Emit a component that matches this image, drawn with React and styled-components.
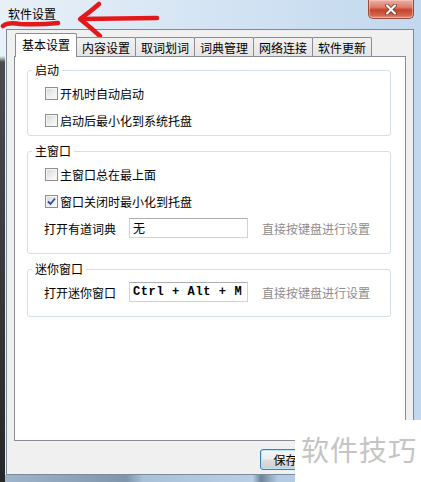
import React from 'react'
import styled, { createGlobalStyle } from 'styled-components'

const GlobalStyle = createGlobalStyle`
  html, body { margin: 0; padding: 0; }
  body {
    width: 421px;
    height: 482px;
    overflow: hidden;
    font-family: "Noto Sans CJK SC", "Noto Sans", sans-serif;
    font-size: 12px;
    color: #000;
  }
`

const Window = styled.div`
  position: relative;
  width: 421px;
  height: 482px;
  box-sizing: border-box;
  padding: 0 7px 7px 6px;
  display: flex;
  flex-direction: column;
  overflow: hidden;
  background:
    linear-gradient(to bottom, transparent 0, transparent 56px, #4a4c50 62px, #262729 100%) left top / 5px 100% no-repeat,
    linear-gradient(to right, #9fb6cc 0, #7e95ab 30%, #a9c1d9 34%, #b8cfe6 60%, #6d8399 62%, #b3cbe3 66%, #b3cbe3 100%) left bottom / 100% 7px no-repeat,
    linear-gradient(to right, #e8f0f8 0%, #d6e5f4 45%, #c2d8ee 100%);
`

const TitleBar = styled.div`
  height: 29px;
  display: flex;
  justify-content: space-between;
  align-items: flex-start;
`

const Title = styled.div`
  padding: 6px 0 0 2px;
  line-height: 16px;
  font-size: 12px;
`

const CloseButton = styled.div`
  width: 44px;
  height: 18px;
  border: 1px solid #9a4a3c;
  border-top: none;
  border-radius: 0 0 5px 5px;
  background: linear-gradient(to bottom, #eab1a6 0%, #dd7d6a 40%, #c8422b 55%, #d0654f 85%, #e39a86 100%);
  display: flex;
  align-items: center;
  justify-content: center;
  box-shadow: inset 0 0 0 1px rgba(255, 210, 200, 0.5);
`

const Client = styled.div`
  flex: 1;
  display: flex;
  flex-direction: column;
  border: 1px solid #7d8a98;
  background: #f0f0f0;
  padding: 3px 7px 0 7px;
`

const TabBar = styled.div`
  display: flex;
  align-items: flex-end;
  height: 23px;
  padding-left: 1px;
  position: relative;
  z-index: 1;
`

const Tab = styled.div`
  box-sizing: border-box;
  height: ${p => (p.$active ? '24px' : '19px')};
  margin-bottom: ${p => (p.$active ? '-1px' : '0')};
  margin-right: -1px;
  padding: ${p => (p.$active ? '3px 6px 0' : '2px 5px 0')};
  line-height: 16px;
  border: 1px solid #898c95;
  border-bottom: none;
  border-radius: 2px 2px 0 0;
  background: ${p => (p.$active ? '#fff' : 'linear-gradient(to bottom, #f2f2f2, #e4e4e4)')};
  white-space: nowrap;
`

const Panel = styled.div`
  height: 385px;
  box-sizing: border-box;
  border: 1px solid #898c95;
  background: #fff;
  padding: 6px 14px 0 12px;
`

const Group = styled.fieldset`
  margin: ${p => (p.$first ? '0' : '8px 0 0')};
  padding: ${p => p.$pad};
  border: 1px solid #d5dfe5;
  border-radius: 3px;
  min-width: 0;
`

const Legend = styled.legend`
  margin-left: -12px;
  padding: 0 3px;
  line-height: 14px;
  font-size: 12px;
`

const Row = styled.div`
  display: flex;
  align-items: center;
  height: ${p => p.$h || 27}px;
`

const Box = styled.span`
  box-sizing: border-box;
  width: 13px;
  height: 13px;
  margin: 0 2px 0 1px;
  border: 1px solid #8e8f8f;
  background: linear-gradient(135deg, #d2d4d6 0%, #eeeeee 55%, #fbfbfb 100%);
  box-shadow: inset 0 0 0 1px #f6f6f6;
  display: flex;
  align-items: center;
  justify-content: center;
`

const FieldLabel = styled.span`
  width: 85px;
`

const Input = styled.div`
  box-sizing: border-box;
  width: 119px;
  height: 20px;
  border: 1px solid #d0d4d9;
  border-top-color: #abadb3;
  padding: 0 3px;
  line-height: 18px;
  font-family: ${p => (p.$mono ? '"Liberation Mono", monospace' : 'inherit')};
  font-size: 12px;
  font-weight: ${p => (p.$mono ? 'bold' : 'normal')};
  letter-spacing: ${p => (p.$mono ? '0.6px' : '0')};
  white-space: nowrap;
  overflow: hidden;
`

const Hint = styled.span`
  margin-left: 14px;
  color: #8d8d8d;
`

const Footer = styled.div`
  display: flex;
  margin-top: 8px;
  padding-left: 246px;
`

const Button = styled.div`
  box-sizing: border-box;
  width: 75px;
  height: 21px;
  border: 1px solid #3c7fb1;
  border-radius: 3px;
  background: linear-gradient(to bottom, #f7f7f7 0%, #ececec 48%, #dddddd 52%, #cfcfcf 100%);
  box-shadow: inset 0 0 0 1px #b8e6fb;
  text-align: center;
  line-height: 19px;
`

const Watermark = styled.div`
  position: absolute;
  right: 0;
  bottom: 0;
  width: 126px;
  height: 62px;
  box-sizing: border-box;
  padding: 10px 0 0 6px;
  background: #fff;
  color: #c4c4c4;
  font-size: 28px;
  line-height: 38px;
  letter-spacing: 1px;
  white-space: nowrap;
`

const Annotation = styled.svg`
  position: absolute;
  left: 0;
  top: 0;
  pointer-events: none;
`

const Check = ({ checked }) => (
  <Box>
    {checked && (
      <svg width="9" height="9" viewBox="0 0 9 9">
        <path d="M1 4.5 L3.5 7 L8 1.5" fill="none" stroke="#2b4c93" strokeWidth="1.8" />
      </svg>
    )}
  </Box>
)

const tabs = ['基本设置', '内容设置', '取词划词', '词典管理', '网络连接', '软件更新']

export default function App() {
  return (
    <Window>
      <GlobalStyle />
      <TitleBar>
        <Title>软件设置</Title>
        <CloseButton>
          <svg width="14" height="11" viewBox="0 0 14 11">
            <path d="M3 1.5 L11 9.5 M11 1.5 L3 9.5" stroke="#6a2a20" strokeWidth="3.6" strokeLinecap="round" />
            <path d="M3 1.5 L11 9.5 M11 1.5 L3 9.5" stroke="#fff" strokeWidth="2.2" strokeLinecap="round" />
          </svg>
        </CloseButton>
      </TitleBar>
      <Client>
        <TabBar>
          {tabs.map((t, i) => (
            <Tab key={t} $active={i === 0}>{t}</Tab>
          ))}
        </TabBar>
        <Panel>
          <Group $first $pad="3px 16px 1px">
            <Legend>启动</Legend>
            <Row><Check />开机时自动启动</Row>
            <Row><Check />启动后最小化到系统托盘</Row>
          </Group>
          <Group $pad="3px 16px 12px">
            <Legend>主窗口</Legend>
            <Row><Check />主窗口总在最上面</Row>
            <Row><Check checked />窗口关闭时最小化到托盘</Row>
            <Row $h={26}>
              <FieldLabel>打开有道词典</FieldLabel>
              <Input>无</Input>
              <Hint>直接按键盘进行设置</Hint>
            </Row>
          </Group>
          <Group $pad="3px 16px 11px">
            <Legend>迷你窗口</Legend>
            <Row $h={26}>
              <FieldLabel>打开迷你窗口</FieldLabel>
              <Input $mono>Ctrl + Alt + M</Input>
              <Hint>直接按键盘进行设置</Hint>
            </Row>
          </Group>
        </Panel>
        <Footer>
          <Button>保存设置</Button>
        </Footer>
      </Client>
      <Watermark>软件技巧</Watermark>
      <Annotation width="170" height="40" viewBox="0 0 170 40">
        <path d="M3 26 Q8 22 20 24 Q40 25 58 23" fill="none" stroke="#e2191b" strokeWidth="4.5" strokeLinecap="round" />
        <path d="M81 19 L157 18" fill="none" stroke="#e2191b" strokeWidth="4.5" strokeLinecap="round" />
        <path d="M99 4 Q90 12 80 19 Q90 27 100 36" fill="none" stroke="#e2191b" strokeWidth="4.5" strokeLinecap="round" strokeLinejoin="round" />
      </Annotation>
    </Window>
  )
}
